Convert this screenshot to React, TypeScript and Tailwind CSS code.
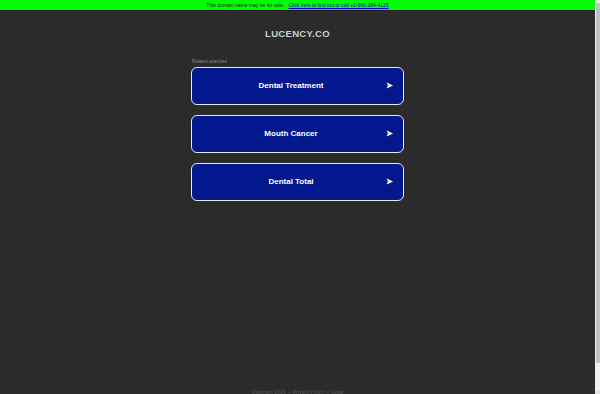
import React from "react";

const searches = ["Dental Treatment", "Mouth Cancer", "Dental Total"];

export default function App() {
  return (
    <div className="flex h-[394px] w-[600px] overflow-hidden bg-[#2b2b2b] font-['Liberation_Sans',Arial,sans-serif]">
      <div className="flex min-w-0 flex-1 flex-col">
        {/* sale banner */}
        <div className="flex h-[11px] items-center justify-center border-b border-[#1f1f1f] bg-[#00ff00] text-[5px] leading-none text-[#222]">
          <span>This domain name may be for sale.</span>
          <a href="#" className="ml-[4px] text-[#0000cc] underline">
            Click here to find out or call +1-866-284-4125
          </a>
        </div>

        <div className="mt-[18px] text-center text-[9.5px] font-bold leading-none tracking-[0.3px] text-[#cfcfcf]">
          LUCENCY.CO
        </div>

        <div className="mx-auto mt-[20px] w-[213px]">
          <div className="mb-[2px] pl-[1px] text-[4.5px] leading-[6px] text-[#8a8a8a]">
            Related searches
          </div>
          <div className="flex flex-col gap-[10px]">
            {searches.map((s) => (
              <div
                key={s}
                className="flex h-[38px] items-center rounded-[6px] border-[1.5px] border-[#e8e8e8] bg-[#02188c] pl-[4px] pr-[9px] text-[8px] font-bold text-white"
              >
                <span className="flex-1 text-center">{s}</span>
                <span className="w-[8px] text-[8px] leading-none">➤</span>
              </div>
            ))}
          </div>
        </div>

        <div className="mt-auto translate-y-[1px] text-center text-[5px] leading-[6px] text-[#555]">
          Copyright 2024 &nbsp;•&nbsp; Privacy Policy &nbsp;•&nbsp; Legal
        </div>
      </div>

      {/* scrollbar */}
      <div className="flex w-[5px] flex-col bg-[#f0f0f0]">
        <div className="h-[3px] bg-[#e8e8e8]" />
        <div className="mx-[0.5px] h-[360px] rounded-[1px] bg-[#c2c2c2]" />
        <div className="flex-1" />
        <div className="h-[3px] bg-[#e0e0e0]" />
      </div>
    </div>
  );
}
